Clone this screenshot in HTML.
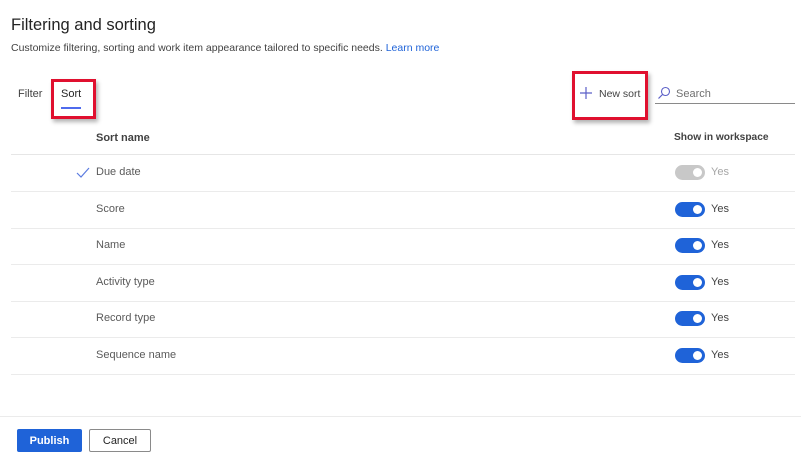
<!DOCTYPE html>
<html><head><style>
body{margin:0;width:801px;height:463px;background:#fff;font-family:"Liberation Sans",sans-serif;color:#242424;position:relative;overflow:hidden}
.a{position:absolute;white-space:nowrap}
.row{position:absolute;left:11px;width:784px;height:36px;border-bottom:1px solid #ebebeb}
.nm{position:absolute;left:85px;top:11px;font-size:11px;color:#5a5a5a}
.tg{position:absolute;left:664px;top:10px;width:30px;height:15px;border-radius:8px;background:#1f63d8}
.tg:after{content:"";position:absolute;right:3px;top:3px;width:9px;height:9px;border-radius:50%;background:#fff}
.y{position:absolute;left:700px;top:11px;font-size:11px;color:#424242}
.red{position:absolute;border:3px solid #e0102f;box-shadow:2px 3px 4px rgba(0,0,0,.3)}
</style></head><body>
<div class="a" style="left:11px;top:16px;font-size:16.5px;color:#242424">Filtering and sorting</div>
<div class="a" style="left:11px;top:42px;font-size:10.5px;color:#424242">Customize filtering, sorting and work item appearance tailored to specific needs. <span style="color:#1f63d8">Learn more</span></div>
<div class="a" style="left:18px;top:88px;font-size:11px;color:#424242">Filter</div>
<div class="a" style="left:61px;top:88px;font-size:11px;color:#242424">Sort</div>
<div class="a" style="left:61px;top:107px;width:20px;height:2px;background:#4f6bed"></div>
<div class="red" style="left:51px;top:79px;width:39px;height:34px"></div>
<svg class="a" style="left:579px;top:86px" width="14" height="14"><path d="M7 1v12M1 7h12" stroke="#5b5fc7" stroke-width="1.2"/></svg>
<div class="a" style="left:599px;top:88px;font-size:10.5px;color:#424242">New sort</div>
<div class="red" style="left:572px;top:71px;width:70px;height:43px"></div>
<svg class="a" style="left:657px;top:86px" width="14" height="14"><circle cx="8.5" cy="5.5" r="4" fill="none" stroke="#5b5fc7" stroke-width="1.1"/><path d="M5.5 8.5L1.5 12.5" stroke="#5b5fc7" stroke-width="1.2"/></svg>
<div class="a" style="left:676px;top:88px;font-size:11px;color:#707070">Search</div>
<div class="a" style="left:655px;top:103px;width:140px;height:1px;background:#8a8a8a"></div>
<div class="a" style="left:96px;top:132px;font-size:11px;font-weight:bold;color:#424242">Sort name</div>
<div class="a" style="left:674px;top:132px;font-size:10.2px;font-weight:bold;color:#424242">Show in workspace</div>
<div class="a" style="left:11px;top:154px;width:784px;height:1px;background:#e6e6e6"></div>
<div class="row" style="top:155px"><svg class="a" style="left:65px;top:12px" width="14" height="12"><path d="M1 6l4 4 8-9" fill="none" stroke="#5b7be0" stroke-width="1.2"/></svg><div class="nm">Due date</div><div class="tg" style="background:#c8c8c8"></div><div class="y" style="color:#a6a6a6">Yes</div></div>
<div class="row" style="top:192px"><div class="nm">Score</div><div class="tg"></div><div class="y">Yes</div></div>
<div class="row" style="top:228px"><div class="nm">Name</div><div class="tg"></div><div class="y">Yes</div></div>
<div class="row" style="top:265px"><div class="nm">Activity type</div><div class="tg"></div><div class="y">Yes</div></div>
<div class="row" style="top:301px"><div class="nm">Record type</div><div class="tg"></div><div class="y">Yes</div></div>
<div class="row" style="top:338px"><div class="nm">Sequence name</div><div class="tg"></div><div class="y">Yes</div></div>
<div class="a" style="left:0;top:416px;width:801px;height:1px;background:#ebebeb"></div>
<div class="a" style="left:17px;top:429px;width:65px;height:23px;background:#1f63d8;border-radius:2px;color:#fff;font-size:11px;font-weight:bold;text-align:center;line-height:24px">Publish</div>
<div class="a" style="left:89px;top:429px;width:60px;height:21px;border:1px solid #8a8a8a;border-radius:2px;color:#242424;font-size:11px;text-align:center;line-height:22px">Cancel</div>
</body></html>
